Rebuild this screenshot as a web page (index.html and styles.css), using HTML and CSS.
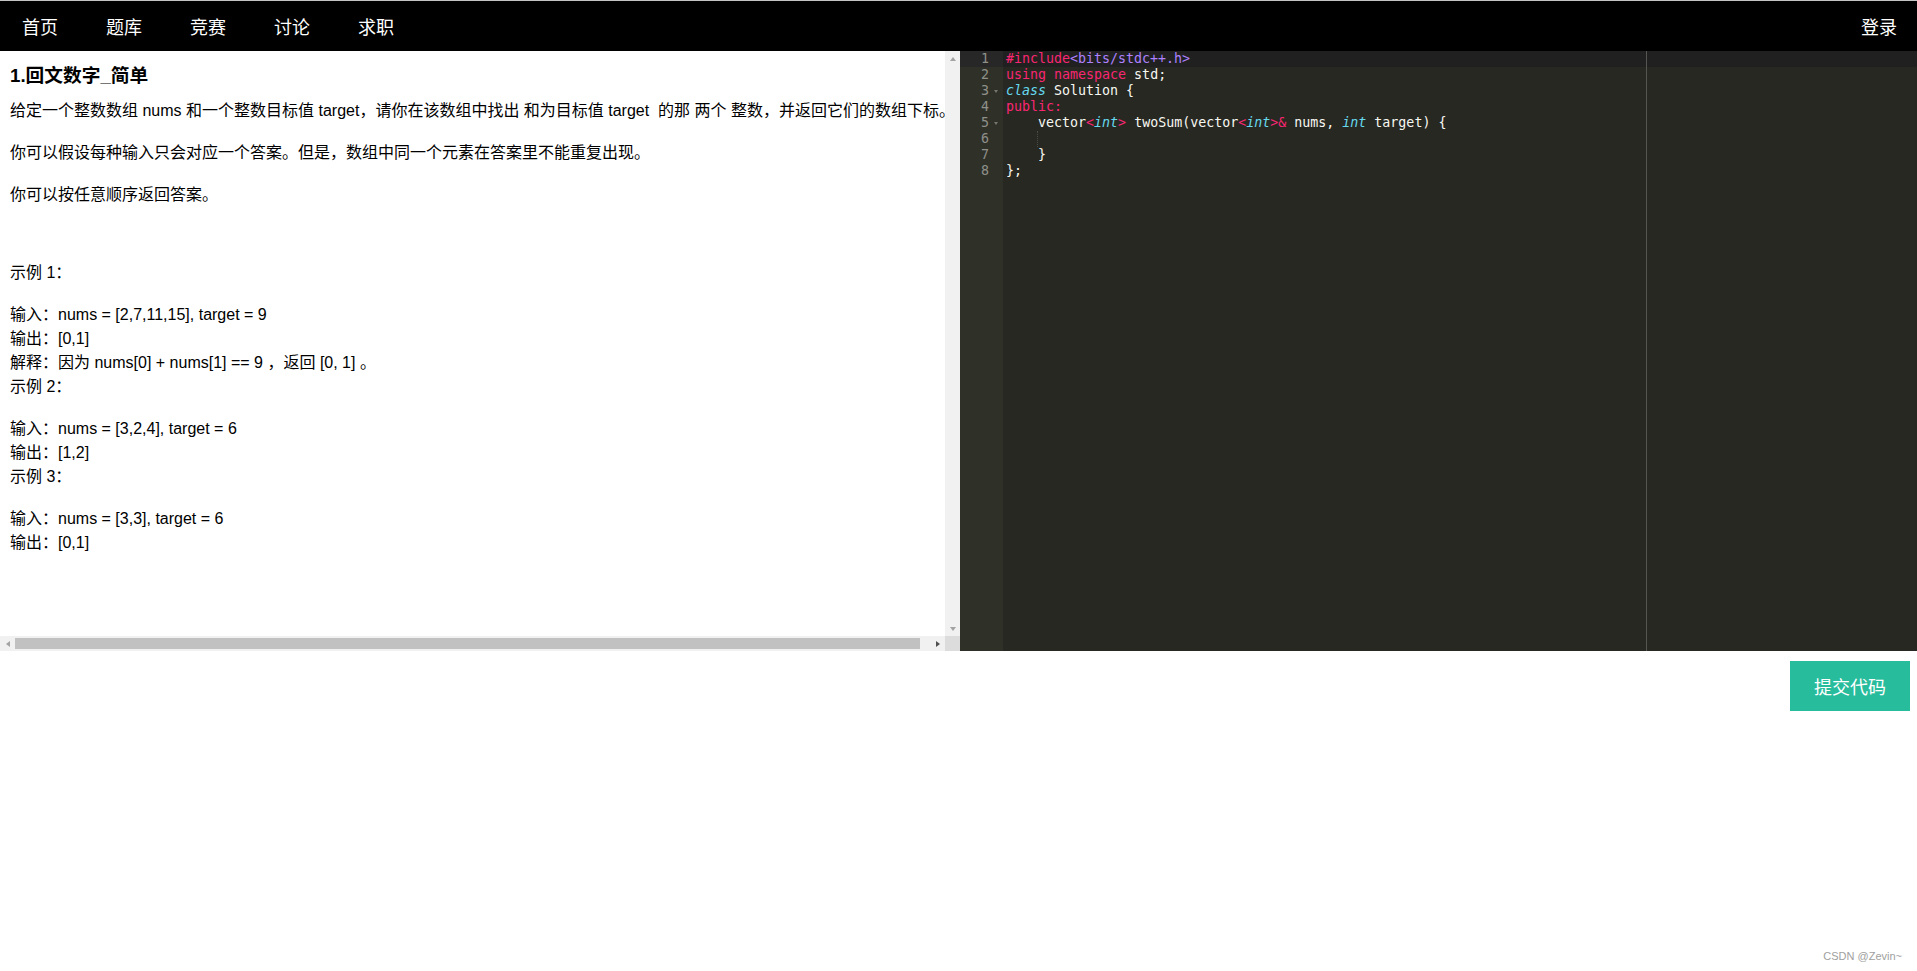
FILE: index.html
```html
<!DOCTYPE html>
<html lang="zh-CN">
<head>
<meta charset="utf-8">
<title>回文数字</title>
<link rel="stylesheet" href="styles.css">
</head>
<body>
<nav class="navbar">
  <ul class="nav-links">
    <li>首页</li>
    <li>题库</li>
    <li>竞赛</li>
    <li>讨论</li>
    <li>求职</li>
  </ul>
  <div class="login">登录</div>
</nav>
<main class="main">
  <section class="problem">
    <div class="problem-view">
      <div class="problem-inner">
        <h3 class="title">1.回文数字_简单</h3>
        <p class="para">给定一个整数数组 nums 和一个整数目标值 target，请你在该数组中找出 和为目标值 target&nbsp; 的那 两个 整数，并返回它们的数组下标。</p>
        <p class="para">你可以假设每种输入只会对应一个答案。但是，数组中同一个元素在答案里不能重复出现。</p>
        <p class="para">你可以按任意顺序返回答案。</p>
        <p class="para spaced">示例 1：</p>
        <p class="para">输入：nums = [2,7,11,15], target = 9<br>输出：[0,1]<br>解释：因为 nums[0] + nums[1] == 9 ，返回 [0, 1] 。<br>示例 2：</p>
        <p class="para">输入：nums = [3,2,4], target = 6<br>输出：[1,2]<br>示例 3：</p>
        <p class="para">输入：nums = [3,3], target = 6<br>输出：[0,1]</p>
      </div>
    </div>
    <div class="vscroll">
      <span class="btn"><span class="tri-up"></span></span>
      <span class="btn"><span class="tri-down"></span></span>
    </div>
    <div class="hscroll">
      <span class="btn"><span class="tri-left"></span></span>
      <span class="thumb"></span>
      <span class="track-rest"></span>
      <span class="btn"><span class="tri-right"></span></span>
    </div>
    <div class="corner"></div>
  </section>
  <section class="editor">
    <div class="gutter">
      <div class="gl active"><span class="num">1</span><span class="fold"></span></div>
      <div class="gl"><span class="num">2</span><span class="fold"></span></div>
      <div class="gl"><span class="num">3</span><span class="fold open"></span></div>
      <div class="gl"><span class="num">4</span><span class="fold"></span></div>
      <div class="gl"><span class="num">5</span><span class="fold open"></span></div>
      <div class="gl"><span class="num">6</span><span class="fold"></span></div>
      <div class="gl"><span class="num">7</span><span class="fold"></span></div>
      <div class="gl"><span class="num">8</span><span class="fold"></span></div>
    </div>
    <div class="code">
      <div class="print-margin"></div>
      <div class="cl active"><span class="kw">#include</span><span class="const">&lt;bits/stdc++.h&gt;</span></div>
      <div class="cl"><span class="kw">using</span> <span class="kw">namespace</span> std;</div>
      <div class="cl"><span class="st">class</span> Solution {</div>
      <div class="cl"><span class="kw">public:</span></div>
      <div class="cl">    vector<span class="kw">&lt;</span><span class="st">int</span><span class="kw">&gt;</span> twoSum(vector<span class="kw">&lt;</span><span class="st">int</span><span class="kw">&gt;&amp;</span> nums, <span class="st">int</span> target) {</div>
      <div class="cl"><span class="guide"></span></div>
      <div class="cl">    }</div>
      <div class="cl">};</div>
    </div>
  </section>
</main>
<div class="actions">
  <button class="submit">提交代码</button>
</div>
<div class="watermark">CSDN @Zevin~</div>
</body>
</html>
```

FILE: styles.css
```css
html, body {
  margin: 0;
  padding: 0;
  background: #ffffff;
}

body {
  font-family: "Liberation Sans", "Noto Sans CJK SC", sans-serif;
  color: #000;
  position: relative;
  height: 971px;
  overflow: hidden;
}

.navbar {
  border-top: 1px solid #c4c4c4;
  height: 50px;
  background: #000;
  display: flex;
  align-items: center;
  justify-content: space-between;
  padding: 0 20px 0 22px;
  font-family: "Noto Sans CJK SC", sans-serif;
  font-size: 18px;
  color: #fff;
}

.nav-links {
  list-style: none;
  margin: 0;
  padding: 0;
  display: flex;
  gap: 48px;
}

.nav-links li {
  line-height: 24px;
}

.login {
  line-height: 24px;
}

.main {
  display: flex;
  height: 600px;
}

/* problem panel with drawn scrollbars */
.problem {
  width: 960px;
  flex: none;
  display: grid;
  grid-template-columns: 945px 15px;
  grid-template-rows: 585px 15px;
  background: #fff;
}

.problem-view {
  overflow: hidden;
}

.problem-inner {
  width: max-content;
  padding: 13px 10px 10px 10px;
  white-space: nowrap;
  font-size: 16px;
  line-height: 24px;
}

.title {
  margin: 0 0 11px 0;
  font-size: 18.72px;
  font-weight: bold;
  line-height: 24px;
}

.para {
  margin: 0 0 18px 0;
}

.para.spaced {
  margin-top: 54px;
}

.vscroll {
  background: #f1f1f1;
  display: flex;
  flex-direction: column;
  justify-content: space-between;
}

.hscroll {
  background: #f1f1f1;
  display: flex;
  align-items: center;
}

.corner {
  background: #dcdcdc;
}

.btn {
  width: 15px;
  height: 15px;
  flex: none;
  display: flex;
  align-items: center;
  justify-content: center;
}

.thumb {
  width: 905px;
  height: 11px;
  flex: none;
  background: #c1c1c1;
}

.track-rest {
  width: 10px;
  flex: none;
}

.tri-up {
  width: 0;
  height: 0;
  border-left: 3.5px solid transparent;
  border-right: 3.5px solid transparent;
  border-bottom: 4px solid #a3a3a3;
}

.tri-down {
  width: 0;
  height: 0;
  border-left: 3.5px solid transparent;
  border-right: 3.5px solid transparent;
  border-top: 4px solid #a3a3a3;
}

.tri-left {
  width: 0;
  height: 0;
  border-top: 3.5px solid transparent;
  border-bottom: 3.5px solid transparent;
  border-right: 4px solid #a3a3a3;
}

.tri-right {
  width: 0;
  height: 0;
  border-top: 3.5px solid transparent;
  border-bottom: 3.5px solid transparent;
  border-left: 4px solid #505050;
}

/* editor */
.editor {
  flex: 1;
  display: flex;
  background: #272822;
  font-family: "DejaVu Sans Mono", monospace;
  font-size: 13.3px;
  line-height: 16px;
  color: #f8f8f2;
  overflow: hidden;
}

.gutter {
  width: 43px;
  flex: none;
  background: #2f3129;
  color: #8f908a;
}

.gl {
  height: 16px;
  display: flex;
  justify-content: flex-end;
  align-items: center;
}

.gl.active {
  background: #272727;
}

.num {
  line-height: 16px;
}

.fold {
  width: 14px;
  height: 16px;
  position: relative;
}

.fold.open::after {
  content: "";
  position: absolute;
  left: 5px;
  top: 7px;
  border-left: 2.5px solid transparent;
  border-right: 2.5px solid transparent;
  border-top: 3px solid #75766f;
}

.code {
  flex: 1;
  position: relative;
}

.cl {
  height: 16px;
  padding-left: 3px;
  white-space: pre;
}

.cl.active {
  background: #202020;
}

.print-margin {
  position: absolute;
  top: 0;
  bottom: 0;
  left: 643px;
  width: 1px;
  background: #555651;
}

.kw {
  color: #f92672;
}

.const {
  color: #ae81ff;
}

.st {
  color: #66d9ef;
  font-style: italic;
}

.guide {
  display: inline-block;
  width: 32px;
  height: 16px;
  box-sizing: border-box;
  border-right: 1px dotted #4a4b45;
  vertical-align: top;
}

.actions {
  display: flex;
  justify-content: flex-end;
  padding: 10px 7px 0 0;
}

.submit {
  width: 120px;
  height: 50px;
  border: none;
  background: #26bc9c;
  color: #fff;
  font-family: "Noto Sans CJK SC", sans-serif;
  font-size: 18px;
  padding: 0;
  cursor: pointer;
}

.watermark {
  position: absolute;
  right: 15px;
  bottom: 9px;
  font-family: "Liberation Sans", sans-serif;
  font-size: 11px;
  color: #a0a0a0;
}
```
